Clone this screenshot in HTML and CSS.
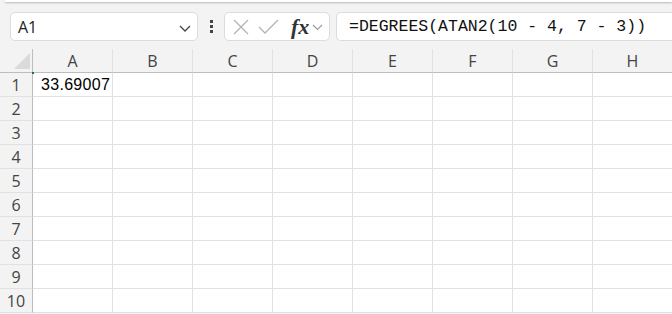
FILE: index.html
```html
<!DOCTYPE html>
<html lang="en">
<head>
    <meta charset="UTF-8">
    <title>Sheet</title>
    <link rel="stylesheet" href="styles.css">
</head>
<body>
    <div class="ribbon-edge"></div>
    <div class="formula-row">
        <div class="name-box">
            <span>A1</span>
            <svg class="chev" width="14" height="10" viewBox="0 0 14 10"><path d="M2 3 L7 8 L12 3" fill="none" stroke="#444" stroke-width="1.3"/></svg>
        </div>
        <div class="dots"><i></i><i></i><i></i></div>
        <div class="fx-box">
            <svg width="16" height="16" viewBox="0 0 16 16"><path d="M1 1 L15 15 M15 1 L1 15" stroke="#b3b3b3" stroke-width="1.3"/></svg>
            <svg width="21" height="15" viewBox="0 0 21 15"><path d="M1 8 L7 14 L20 1" fill="none" stroke="#b3b3b3" stroke-width="1.3"/></svg>
            <span class="fx">fx</span>
            <svg width="11" height="8" viewBox="0 0 11 8"><path d="M1 2 L5.5 6.5 L10 2" fill="none" stroke="#999" stroke-width="1.1"/></svg>
        </div>
        <div class="formula">=DEGREES(ATAN2(10 - 4, 7 - 3))</div>
    </div>
    <div class="sheet">
        <div class="corner"><div class="tri"></div><div class="handle"></div></div>
        <div class="col-head">A</div>
        <div class="col-head">B</div>
        <div class="col-head">C</div>
        <div class="col-head">D</div>
        <div class="col-head">E</div>
        <div class="col-head">F</div>
        <div class="col-head">G</div>
        <div class="col-head">H</div>
    </div>
    <script>
        // rows of the sheet
        let sheet = document.querySelector('.sheet');
        for (let r = 1; r <= 10; r++) {
            let html = `<div class="row-head">${r}</div>`;
            for (let c = 0; c < 8; c++) {
                let val = (r === 1 && c === 0) ? '33.69007' : '';
                html += `<div class="cell">${val}</div>`;
            }
            sheet.innerHTML += html;
        }
    </script>
</body>
</html>
```

FILE: styles.css
```css
body {
    margin: 0;
    background: #f3f3f3;
    font-family: 'Open Sans', 'Noto Sans', sans-serif;
    overflow: hidden;
}
.ribbon-edge {
    height: 2px;
    margin-left: 5px;
    background: #fff;
    box-shadow: 0 1px 2px rgba(0, 0, 0, 0.25);
}
.formula-row {
    display: flex;
    align-items: center;
    height: 29px;
    margin-top: 10px;
    padding-left: 10px;
}
.name-box {
    box-sizing: border-box;
    width: 188px;
    height: 29px;
    background: #fff;
    border: 1px solid #dcdcdc;
    border-radius: 5px;
    display: flex;
    align-items: center;
    justify-content: space-between;
    padding: 0 5px 0 7px;
    font-size: 16px;
    color: #222;
}
.chev {
    margin-top: 2px;
}
.dots {
    width: 26px;
    display: flex;
    flex-direction: column;
    align-items: center;
    gap: 2px;
}
.dots i {
    width: 3px;
    height: 3px;
    background: #444;
}
.fx-box {
    box-sizing: border-box;
    width: 106px;
    height: 29px;
    background: #fff;
    border: 1px solid #dcdcdc;
    border-radius: 5px;
    display: flex;
    align-items: center;
    padding-left: 8px;
    gap: 9px;
}
.fx {
    font-family: 'Liberation Serif', serif;
    font-style: italic;
    font-weight: bold;
    font-size: 22px;
    color: #333;
    margin-left: 3px;
    margin-right: -6px;
    line-height: 1;
}
.formula {
    box-sizing: border-box;
    flex: 1;
    height: 29px;
    margin-left: 6px;
    background: #fff;
    border: 1px solid #dcdcdc;
    border-right: none;
    border-radius: 5px 0 0 5px;
    padding-left: 12px;
    font-family: 'Liberation Mono', monospace;
    font-size: 16.5px;
    line-height: 27px;
    color: #111;
    white-space: nowrap;
}
.sheet {
    display: grid;
    grid-template-columns: 33px repeat(8, 80px);
    grid-template-rows: 24px;
    grid-auto-rows: 24px;
    margin-top: 8px;
    font-size: 16px;
}
.corner {
    position: relative;
    border-right: 1px solid #bdbdbd;
    border-bottom: 1px solid #bdbdbd;
}
.tri {
    position: absolute;
    right: 2px;
    bottom: 3px;
    width: 0;
    height: 0;
    border-left: 16px solid transparent;
    border-bottom: 16px solid #dadada;
}
.handle {
    position: absolute;
    right: -2px;
    bottom: -2px;
    width: 2px;
    height: 2px;
    background: #1e7145;
}
.col-head {
    box-sizing: border-box;
    border-right: 1px solid #e1e1e1;
    border-bottom: 1px solid #bdbdbd;
    text-align: center;
    line-height: 24px;
    color: #444;
}
.row-head {
    box-sizing: border-box;
    border-right: 1px solid #bdbdbd;
    border-bottom: 1px solid #e1e1e1;
    text-align: center;
    line-height: 24px;
    color: #444;
}
.cell {
    box-sizing: border-box;
    background: #fff;
    border-right: 1px solid #e1e1e1;
    border-bottom: 1px solid #e1e1e1;
    padding-left: 8px;
    font-family: 'Liberation Sans', sans-serif;
    font-size: 16px;
    letter-spacing: 0.3px;
    line-height: 23px;
    color: #000;
}
```
